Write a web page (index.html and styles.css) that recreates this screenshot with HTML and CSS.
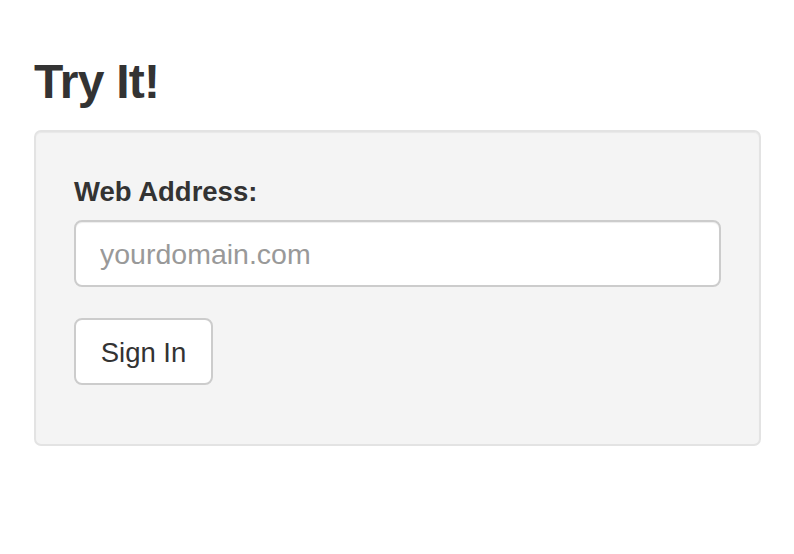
FILE: index.html
```html
<!DOCTYPE html>
<html>
<head>
<meta charset="utf-8">
<link rel="stylesheet" href="styles.css">
</head>
<body>
<div class="page">
  <h1 class="title">Try It!</h1>
  <div class="well">
    <form class="form">
      <div class="group">
        <label class="label" for="addr">Web Address:</label>
        <input class="input" id="addr" type="text" placeholder="yourdomain.com">
      </div>
      <button class="btn" type="button">Sign In</button>
    </form>
  </div>
</div>
</body>
</html>
```
FILE: styles.css
```css
* { box-sizing: border-box; }
html, body { margin: 0; padding: 0; background: #fff; }
body { font-family: "Liberation Sans", Arial, sans-serif; color: #333; }
.page { padding: 56px 33px 0 34px; }
.title {
  margin: 0 0 22px 0;
  font-size: 48px;
  line-height: 52px;
  font-weight: bold;
  color: #333;
  letter-spacing: -0.8px;
}
.well {
  background: #f4f4f4;
  border: 2px solid #e3e3e3;
  border-radius: 7px;
  padding: 38px 38px 59px 38px;
  box-shadow: inset 0 1px 1px rgba(0,0,0,0.05);
}
.form { display: flex; flex-direction: column; align-items: flex-start; }
.group { display: flex; flex-direction: column; width: 100%; margin-bottom: 31px; }
.label {
  font-size: 27.5px;
  font-weight: bold;
  line-height: 36px;
  margin-bottom: 10px;
  margin-top: 4px;
}
.input {
  height: 67px;
  width: 100%;
  border: 2px solid #ccc;
  border-radius: 8px;
  background: #fff;
  padding: 2px 24px 0 24px;
  font-family: "Liberation Sans", Arial, sans-serif;
  font-size: 28.5px;
  color: #555;
  outline: none;
  box-shadow: inset 0 1px 1px rgba(0,0,0,0.075);
}
.input::placeholder { color: #999; }
.btn {
  height: 67px;
  width: 139px;
  border: 2px solid #ccc;
  border-radius: 8px;
  background: #fff;
  font-family: "Liberation Sans", Arial, sans-serif;
  font-size: 27.5px;
  color: #333;
  padding: 2px 0 0 0;
}
```
